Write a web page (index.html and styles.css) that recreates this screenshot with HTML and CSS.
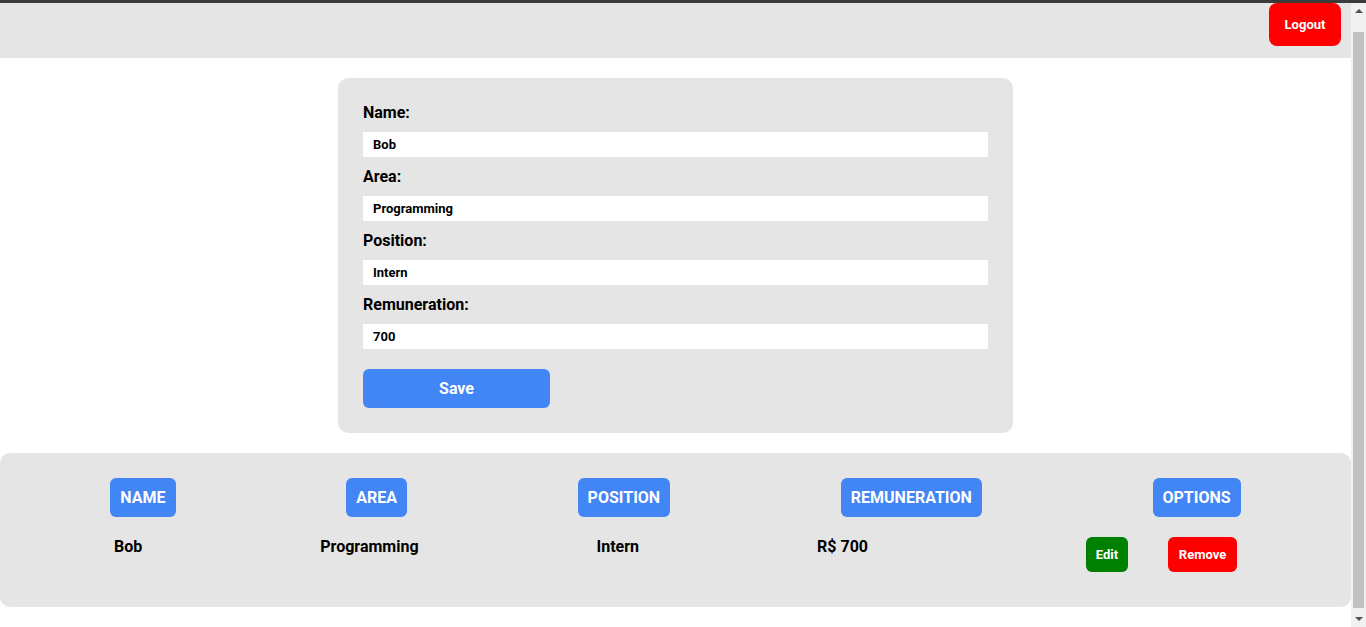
FILE: index.html
```html
<!DOCTYPE html>
<html>
<head>
<meta charset="utf-8">
<link rel="stylesheet" href="styles.css">
</head>
<body>
<div class="topline"></div>
<div class="window">
  <div class="page">
    <header class="header">
      <button class="btn btn-logout">Logout</button>
    </header>
    <main>
      <form class="card">
        <label class="label">Name:</label>
        <input class="input" type="text" value="Bob">
        <label class="label">Area:</label>
        <input class="input" type="text" value="Programming">
        <label class="label">Position:</label>
        <input class="input" type="text" value="Intern">
        <label class="label">Remuneration:</label>
        <input class="input" type="text" value="700">
        <button type="button" class="btn btn-save">Save</button>
      </form>
      <section class="table">
        <div class="row">
          <span class="th">NAME</span>
          <span class="th">AREA</span>
          <span class="th">POSITION</span>
          <span class="th">REMUNERATION</span>
          <span class="th">OPTIONS</span>
        </div>
        <div class="row row-data">
          <span class="td">Bob</span>
          <span class="td">Programming</span>
          <span class="td">Intern</span>
          <span class="td">R$ 700</span>
          <span class="options">
            <button class="btn btn-edit">Edit</button>
            <button class="btn btn-remove">Remove</button>
          </span>
        </div>
      </section>
    </main>
  </div>
  <div class="scrollbar">
    <div class="arrow arrow-up"></div>
    <div class="track"><div class="thumb"></div></div>
    <div class="arrow arrow-down"></div>
  </div>
</div>
</body>
</html>
```

FILE: styles.css
```css
html, body {
  margin: 0;
  padding: 0;
  overflow: hidden;
}
body {
  font-family: Roboto, "Liberation Sans", sans-serif;
  background: #ffffff;
  color: #000;
}
.topline {
  height: 3px;
  background: #3a3a3a;
}
.window {
  display: flex;
  height: 624px;
}
.page {
  flex: 1;
  min-width: 0;
}
.scrollbar {
  width: 15px;
  background: #f1f1f1;
  display: flex;
  flex-direction: column;
  align-items: center;
}
.arrow {
  width: 0;
  height: 0;
  border-left: 4px solid transparent;
  border-right: 4px solid transparent;
}
.arrow-up {
  margin-top: 6px;
  border-bottom: 4px solid #505050;
}
.arrow-down {
  margin-bottom: 6px;
  border-top: 4px solid #505050;
}
.track {
  flex: 1;
  width: 100%;
  padding: 19px 2px 9px;
  box-sizing: border-box;
  display: flex;
}
.thumb {
  flex: 1;
  background: #c1c1c1;
}
.header {
  height: 55px;
  background: #e5e5e5;
  display: flex;
  justify-content: flex-end;
  align-items: flex-start;
  padding-right: 10px;
}
.btn {
  border: none;
  font-family: Roboto, "Liberation Sans", sans-serif;
  font-weight: bold;
  color: #fff;
  cursor: pointer;
  padding: 0;
}
.btn-logout {
  width: 72px;
  height: 43px;
  background: #ff0000;
  border-radius: 8px;
  font-size: 13px;
}
.card {
  width: 675px;
  box-sizing: border-box;
  margin: 20px auto 0;
  background: #e5e5e5;
  border-radius: 10px;
  padding: 25px;
  display: flex;
  flex-direction: column;
  align-items: flex-start;
}
.label {
  font-size: 16px;
  font-weight: bold;
  line-height: 19px;
  margin-bottom: 10px;
}
.input {
  width: 625px;
  height: 25px;
  box-sizing: border-box;
  border: none;
  outline: none;
  background: #fff;
  padding: 0 10px;
  font-family: Roboto, "Liberation Sans", sans-serif;
  font-weight: bold;
  font-size: 13px;
  color: #000;
  margin-bottom: 10px;
}
.btn-save {
  margin-top: 10px;
  width: 187px;
  height: 39px;
  background: #4285f4;
  border-radius: 6px;
  font-size: 16px;
}
.table {
  margin-top: 20px;
  background: #e5e5e5;
  border-radius: 10px;
  padding: 25px 25px 35px;
}
.row {
  display: flex;
  justify-content: space-around;
  align-items: flex-start;
}
.row-data {
  margin-top: 20px;
}
.th {
  background: #4285f4;
  color: #fff;
  font-weight: bold;
  font-size: 16px;
  height: 39px;
  line-height: 39px;
  padding: 0 10px;
  border-radius: 6px;
}
.td {
  font-weight: bold;
  font-size: 16px;
  line-height: 19px;
}
.options {
  display: flex;
}
.btn-edit, .btn-remove {
  height: 35px;
  border-radius: 6px;
  font-size: 13px;
  margin-left: 40px;
}
.btn-edit {
  width: 42px;
  background: #008000;
}
.btn-remove {
  width: 69px;
  background: #ff0000;
}
```
